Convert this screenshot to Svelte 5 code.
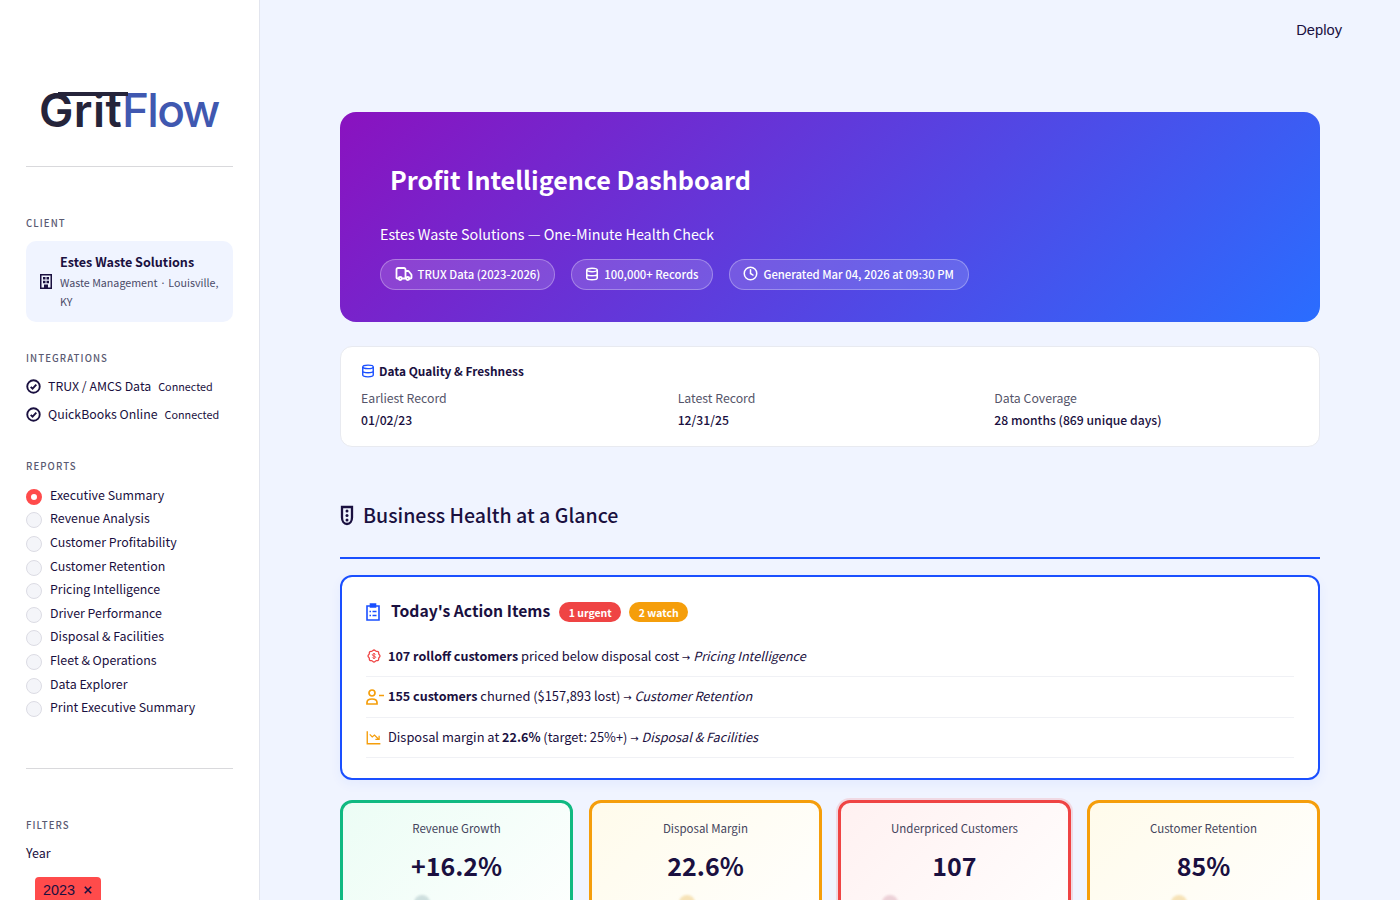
<script>
    const reports = [
        'Executive Summary',
        'Revenue Analysis',
        'Customer Profitability',
        'Customer Retention',
        'Pricing Intelligence',
        'Driver Performance',
        'Disposal & Facilities',
        'Fleet & Operations',
        'Data Explorer',
        'Print Executive Summary'
    ];

    const integrations = [
        { name: 'TRUX / AMCS Data', status: 'Connected' },
        { name: 'QuickBooks Online', status: 'Connected' }
    ];

    const freshness = [
        { label: 'Earliest Record', value: '01/02/23' },
        { label: 'Latest Record', value: '12/31/25' },
        { label: 'Data Coverage', value: '28 months (869 unique days)' }
    ];

    const kpis = [
        { label: 'Revenue Growth', value: '+16.2%', tone: 'good', dot: 71 },
        { label: 'Disposal Margin', value: '22.6%', tone: 'watch', dot: 87 },
        { label: 'Underpriced Customers', value: '107', tone: 'bad', dot: 41 },
        { label: 'Customer Retention', value: '85%', tone: 'watch', dot: 81 }
    ];
</script>

<div class="app">
    <aside class="sidebar">
        <div class="logo">
            <span class="logo-bar"></span>
            <span class="grit">Grit</span><span class="flow">Flow</span>
        </div>
        <hr class="rule" />

        <div class="side-label client-label">CLIENT</div>
        <div class="client-card">
            <svg class="building" viewBox="0 0 12 15" width="12" height="15"><path fill="#1a1040" fill-rule="evenodd" d="M0 0h12v15H0zM1.500 1.500v12H4v-3h4v3h2.500v-12zM3 3h2.500v2.500H3zM6.500 3H9v2.500H6.500zM3 6.800h2.500v2.400H3zM6.500 6.800H9v2.400H6.500z"/></svg>
            <div class="client-text">
                <div class="client-name">Estes Waste Solutions</div>
                <div class="client-sub">Waste Management · Louisville, KY</div>
            </div>
        </div>

        <div class="side-label integrations-label">INTEGRATIONS</div>
        <div class="integrations">
            {#each integrations as item}
                <div class="integration">
                    <svg viewBox="0 0 24 24" width="15" height="15" fill="none" stroke="#1a1040" stroke-width="3"><circle cx="12" cy="12" r="10"/><path d="M7.500 12.500l3 3 6-6.500"/></svg>
                    <span class="int-name">{item.name}</span>
                    <span class="int-status">{item.status}</span>
                </div>
            {/each}
        </div>

        <div class="side-label reports-label">REPORTS</div>
        <div class="reports">
            {#each reports as report, i}
                <div class="report">
                    <span class="radio" class:active={i === 0}></span>
                    <span class="report-name">{report}</span>
                </div>
            {/each}
        </div>
        <hr class="rule second" />

        <div class="side-label filters-label">FILTERS</div>
        <div class="year-label">Year</div>
        <div class="tag">
            2023
            <svg viewBox="0 0 10 10" width="8" height="8" fill="none" stroke="#1a1040" stroke-width="2"><path d="M1 1l8 8M9 1l-8 8"/></svg>
        </div>
    </aside>

    <main class="main">
        <div class="deploy">Deploy</div>

        <section class="hero">
            <h1>Profit Intelligence Dashboard</h1>
            <p>Estes Waste Solutions — One-Minute Health Check</p>
            <div class="pills">
                <span class="pill">
                    <svg viewBox="0 0 24 24" width="18" height="18" fill="none" stroke="#fff" stroke-width="2.400" stroke-linecap="round" stroke-linejoin="round"><path d="M14 18V6a2 2 0 0 0-2-2H4a2 2 0 0 0-2 2v11a1 1 0 0 0 1 1h2M15 18H9M19 18h2a1 1 0 0 0 1-1v-3.650a1 1 0 0 0-.22-.624l-3.480-4.350A1 1 0 0 0 17.520 8H14"/><circle cx="17" cy="18" r="2"/><circle cx="7" cy="18" r="2"/></svg>
                    TRUX Data (2023-2026)
                </span>
                <span class="pill">
                    <svg viewBox="0 0 24 24" width="14" height="14" fill="none" stroke="#fff" stroke-width="2.600"><ellipse cx="12" cy="5" rx="9" ry="3"/><path d="M3 5v14c0 1.700 4 3 9 3s9-1.300 9-3V5M3 12c0 1.700 4 3 9 3s9-1.300 9-3"/></svg>
                    100,000+ Records
                </span>
                <span class="pill">
                    <svg viewBox="0 0 24 24" width="15" height="15" fill="none" stroke="#fff" stroke-width="2.400" stroke-linecap="round"><circle cx="12" cy="12" r="10"/><path d="M12 6v6l4 2.500"/></svg>
                    Generated Mar 04, 2026 at 09:30 PM
                </span>
            </div>
        </section>

        <section class="quality">
            <div class="quality-title">
                <svg viewBox="0 0 24 24" width="14" height="14" fill="none" stroke="#1a4fff" stroke-width="2.400"><ellipse cx="12" cy="5" rx="9" ry="3"/><path d="M3 5v14c0 1.700 4 3 9 3s9-1.300 9-3V5M3 12c0 1.700 4 3 9 3s9-1.300 9-3"/></svg>
                Data Quality &amp; Freshness
            </div>
            <div class="quality-grid">
                {#each freshness as f}
                    <div>
                        <div class="q-label">{f.label}</div>
                        <div class="q-value">{f.value}</div>
                    </div>
                {/each}
            </div>
        </section>

        <h2 class="section-title">
            <svg viewBox="0 0 14 21" width="14" height="21" fill="none" stroke="#1a1040" stroke-width="2.300"><path d="M2 2h10v10.500c0 3.500-2 6.500-5 6.500s-5-3-5-6.500z"/><circle cx="7" cy="6" r="1.500" fill="#1a1040" stroke="none"/><circle cx="7" cy="10.500" r="1.500" fill="#1a1040" stroke="none"/><circle cx="7" cy="15" r="1.500" fill="#1a1040" stroke="none"/></svg>
            Business Health at a Glance
        </h2>
        <div class="section-line"></div>

        <section class="actions">
            <div class="actions-head">
                <svg viewBox="0 0 14 18" width="14" height="18" fill="none" stroke="#1a4fff" stroke-width="1.600"><path d="M4 3H1v14h12V3h-3"/><path d="M4.500 1h5v3h-5z" fill="#1a4fff"/><path d="M3.500 8.500h1.500M6.500 8.500h4M3.500 12.500h1.500M6.500 12.500h4"/></svg>
                <span class="actions-title">Today's Action Items</span>
                <span class="badge urgent">1 urgent</span>
                <span class="badge watch">2 watch</span>
            </div>
            <div class="action">
                <span class="action-icon">
                    <svg viewBox="0 0 24 24" width="16" height="16" fill="none" stroke="#ef4444" stroke-width="1.900"><path d="M5 7.200a2.200 2.200 0 0 1 2.200-2.200h1a2.200 2.200 0 0 0 1.550-.64l.7-.7a2.200 2.200 0 0 1 3.120 0l.7.700c.412.410.97.640 1.550.640h1a2.200 2.200 0 0 1 2.200 2.200v1c0 .58.230 1.138.64 1.550l.7.700a2.200 2.200 0 0 1 0 3.120l-.7.700a2.200 2.200 0 0 0-.64 1.550v1a2.200 2.200 0 0 1-2.200 2.200h-1a2.200 2.200 0 0 0-1.550.64l-.7.700a2.200 2.200 0 0 1-3.120 0l-.7-.7a2.200 2.200 0 0 0-1.550-.64h-1a2.200 2.200 0 0 1-2.200-2.200v-1a2.200 2.200 0 0 0-.64-1.550l-.7-.7a2.200 2.200 0 0 1 0-3.120l.7-.7A2.200 2.200 0 0 0 5 8.200z"/><path d="M14.500 9.800c-.4-.8-1.300-1.300-2.500-1.300-1.500 0-2.500.7-2.500 1.800 0 2.400 5 1.200 5 3.500 0 1-1.100 1.700-2.500 1.700-1.200 0-2.100-.5-2.500-1.300M12 7.500v9" stroke-width="1.400"/></svg>
                </span>
                <span class="action-text"><b>107 rolloff customers</b> priced below disposal cost <span class="arrow">→</span> <i>Pricing Intelligence</i></span>
            </div>
            <div class="action">
                <span class="action-icon">
                    <svg viewBox="0 0 18 16" width="18" height="16" fill="none" stroke="#f59e0b" stroke-width="1.700"><circle cx="6" cy="4" r="3"/><path d="M1 15v-1.500C1 11.500 3 10 6 10s5 1.500 5 3.500V15zM13 6.500h5"/></svg>
                </span>
                <span class="action-text"><b>155 customers</b> churned ($157,893 lost) <span class="arrow">→</span> <i>Customer Retention</i></span>
            </div>
            <div class="action">
                <span class="action-icon">
                    <svg viewBox="0 0 24 24" width="15" height="15" fill="none" stroke="#f59e0b" stroke-width="2.200"><path d="M2 2v20h21"/><path d="M6 7l4 4 3.500-3 6 6M21 9v6h-6" stroke-width="2"/></svg>
                </span>
                <span class="action-text">Disposal margin at <b>22.6%</b> (target: 25%+) <span class="arrow">→</span> <i>Disposal &amp; Facilities</i></span>
            </div>
        </section>

        <section class="kpis">
            {#each kpis as kpi}
                <div class="kpi {kpi.tone}">
                    <div class="kpi-label">{kpi.label}</div>
                    <div class="kpi-value">{kpi.value}</div>
                    <span class="kpi-dot" style="left: {kpi.dot}px"></span>
                </div>
            {/each}
        </section>
    </main>
</div>

<style>
    :global(body) {
        margin: 0;
        overflow: hidden;
    }

    .app {
        display: flex;
        height: 900px;
        overflow: hidden;
        font-family: "Noto Sans CJK SC", "Noto Sans", sans-serif;
        color: #1a1040;
    }

    .sidebar {
        box-sizing: border-box;
        width: 260px;
        flex: none;
        padding: 0 26px;
        background: #fff;
        border-right: 1px solid #e2e5ee;
    }

    .logo {
        position: relative;
        margin-top: 82px;
        height: 56px;
        font-family: Inter, sans-serif;
        font-size: 46px;
        line-height: 56px;
        padding-left: 13px;
        white-space: nowrap;
    }

    .logo-bar {
        position: absolute;
        left: 32px;
        top: 10px;
        width: 70px;
        height: 4px;
        background: #25243a;
    }

    .grit { color: #25243a; font-weight: 600; letter-spacing: 0.400px; }
    .flow { color: #4058b0; font-weight: 500; letter-spacing: -1.800px; }

    .rule {
        margin: 28px 0 0;
        border: none;
        border-top: 1px solid #d9d9dc;
    }

    .rule.second { margin-top: 48px; }

    .side-label {
        font-size: 9.600px;
        line-height: 14px;
        font-weight: 500;
        letter-spacing: 1.100px;
        color: #5a5a72;
    }

    .client-label { margin-top: 49px; }

    .client-card {
        display: flex;
        align-items: center;
        gap: 8px;
        margin-top: 11px;
        padding: 0 14px;
        background: #f0f4ff;
        border-radius: 10px;
        height: 81px;
        box-sizing: border-box;
    }

    .building { flex: none; }

    .client-name {
        font-size: 12.600px;
        line-height: 20px;
        font-weight: 600;
    }

    .client-sub {
        margin-top: 1px;
        font-family: "Noto Sans CJK JP", "Noto Sans", sans-serif;
        font-size: 10.700px;
        line-height: 19px;
        color: #4a4a68;
    }

    .integrations-label { margin-top: 29px; }

    .integrations { margin-top: 7px; }

    .integration {
        display: flex;
        align-items: center;
        height: 28px;
        font-size: 12.350px;
        white-space: nowrap;
    }

    .integration svg { flex: none; margin-right: 7px; }

    .int-status {
        font-size: 10.800px;
        margin-left: 7px;
    }

    .reports-label { margin-top: 31px; }

    .reports { margin-top: 11px; }

    .report {
        display: flex;
        align-items: center;
        gap: 8px;
        height: 23.600px;
        font-size: 12.400px;
    }

    .report-name {
        position: relative;
        top: -1px;
    }

    .radio {
        box-sizing: border-box;
        width: 16px;
        height: 16px;
        border-radius: 50%;
        border: 1px solid #dcdce4;
        background: #f4f5f9;
        position: relative;
        top: 1px;
    }

    .radio.active {
        border: 5px solid #ff4b4b;
        background: #fff;
    }

    .filters-label { margin-top: 49px; }

    .year-label {
        margin-top: 11px;
        font-size: 12.500px;
        line-height: 20px;
    }

    .tag {
        display: inline-flex;
        align-items: center;
        gap: 9px;
        margin: 14px 0 0 9px;
        padding: 0 9px 0 8px;
        height: 27px;
        font-family: "Liberation Sans", sans-serif;
        font-size: 14.400px;
        background: #ff4b4b;
        border-radius: 4px;
    }

    .main {
        flex: 1;
        min-width: 0;
        position: relative;
        box-sizing: border-box;
        padding: 112px 80px 0;
        background: #f0f4ff;
    }

    .deploy {
        position: absolute;
        top: 21px;
        right: 58px;
        font-family: "Liberation Sans", sans-serif;
        font-size: 14.700px;
        line-height: 18px;
    }

    .hero {
        box-sizing: border-box;
        height: 210px;
        padding: 45px 40px 0;
        border-radius: 16px;
        color: #fff;
        background: linear-gradient(135deg, #8a12bf 0%, #2a6dff 100%);
    }

    .hero h1 {
        margin: 0 0 0 10px;
        font-size: 25.100px;
        line-height: 44px;
        font-weight: 700;
    }

    .hero p {
        margin: 21px 0 0;
        font-size: 14.330px;
        line-height: 24px;
    }

    .pills {
        display: flex;
        gap: 16px;
        margin-top: 13px;
    }

    .pill {
        display: inline-flex;
        align-items: center;
        gap: 5px;
        height: 31px;
        padding: 0 13.500px 1.500px;
        box-sizing: border-box;
        border-radius: 16px;
        font-size: 11.300px;
        font-weight: 500;
        white-space: nowrap;
        background: rgba(255, 255, 255, 0.15);
        border: 1px solid rgba(255, 255, 255, 0.3);
    }

    .quality {
        margin-top: 24px;
        box-sizing: border-box;
        height: 101px;
        padding: 14px 20px;
        background: #fff;
        border: 1px solid #e8eaf0;
        border-radius: 12px;
    }

    .quality-title {
        display: flex;
        align-items: center;
        gap: 4px;
        font-size: 11.850px;
        line-height: 20px;
        font-weight: 600;
    }

    .quality-grid {
        display: grid;
        grid-template-columns: repeat(3, 1fr);
        gap: 12px;
        margin-top: 7px;
    }

    .q-label {
        font-size: 12.300px;
        line-height: 20px;
        color: #55556a;
    }

    .q-value {
        margin-top: 2px;
        font-size: 12.200px;
        line-height: 20px;
        font-weight: 500;
    }

    .section-title {
        display: flex;
        align-items: center;
        gap: 9px;
        margin: 51px 0 0;
        font-size: 19.550px;
        line-height: 34px;
        font-weight: 500;
    }

    .section-line {
        height: 2px;
        margin-top: 25px;
        background: #1a4fff;
    }

    .actions {
        margin-top: 16px;
        box-sizing: border-box;
        height: 205px;
        padding: 20px 24px 0;
        background: #fff;
        border: 2px solid #1a4fff;
        border-radius: 12px;
        box-shadow: 0 4px 12px rgba(26, 79, 255, 0.06);
    }

    .actions-head {
        display: flex;
        align-items: center;
        height: 30px;
    }

    .actions-head svg { margin-right: 11px; }

    .actions-title {
        padding-bottom: 3px;
        font-size: 15.700px;
        font-weight: 600;
        margin-right: 9px;
    }

    .badge {
        display: inline-flex;
        align-items: center;
        height: 20px;
        padding: 0 9.500px;
        border-radius: 10px;
        font-size: 10.500px;
        font-weight: 600;
        color: #fff;
        margin-right: 8px;
    }

    .urgent { background: #ef4444; }
    .watch { background: #f59e0b; }

    .action {
        display: flex;
        align-items: center;
        box-sizing: border-box;
        height: 40.500px;
        font-size: 12.850px;
        border-bottom: 1px solid #f0f1f5;
    }

    .action-icon {
        display: flex;
        flex: none;
        width: 22px;
    }

    .action-text { padding-bottom: 2px; }

    .actions-head + .action { margin-top: 9.500px; }

    .action b { font-weight: 600; font-size: 12.550px; }

    .action i { font-size: 12.660px; }

    .arrow {
        font-family: "DejaVu Sans", sans-serif;
        font-size: 10px;
    }

    .kpis {
        display: grid;
        grid-template-columns: repeat(4, 1fr);
        gap: 16px;
        margin-top: 20px;
    }

    .kpi {
        position: relative;
        box-sizing: border-box;
        height: 160px;
        padding-top: 16px;
        text-align: center;
        border: 3px solid;
        border-radius: 12px;
    }

    .kpi.good { border-color: #10b981; background: linear-gradient(135deg, #ecfdf5, #fff); }
    .kpi.watch { border-color: #f59e0b; background: linear-gradient(135deg, #fffbeb, #fff); }
    .kpi.bad {
        border-color: #ef4444;
        background: linear-gradient(135deg, #fff1f1, #fff);
        box-shadow: 0 0 0 2px rgba(239, 68, 68, 0.15);
    }

    .kpi-label {
        font-size: 11.500px;
        line-height: 18px;
        font-weight: 400;
        color: #44445c;
    }

    .kpi-value {
        margin-top: 10px;
        font-size: 25px;
        line-height: 36px;
        font-weight: 700;
    }

    .kpi-dot {
        position: absolute;
        top: 92px;
        width: 16px;
        height: 16px;
        border-radius: 50%;
        opacity: 0.8;
        filter: blur(0.800px);
    }

    .good .kpi-dot { background: #c5d8d8; }
    .watch .kpi-dot { background: #f4dca8; }
    .bad .kpi-dot { background: #e8c8d0; }
</style>
